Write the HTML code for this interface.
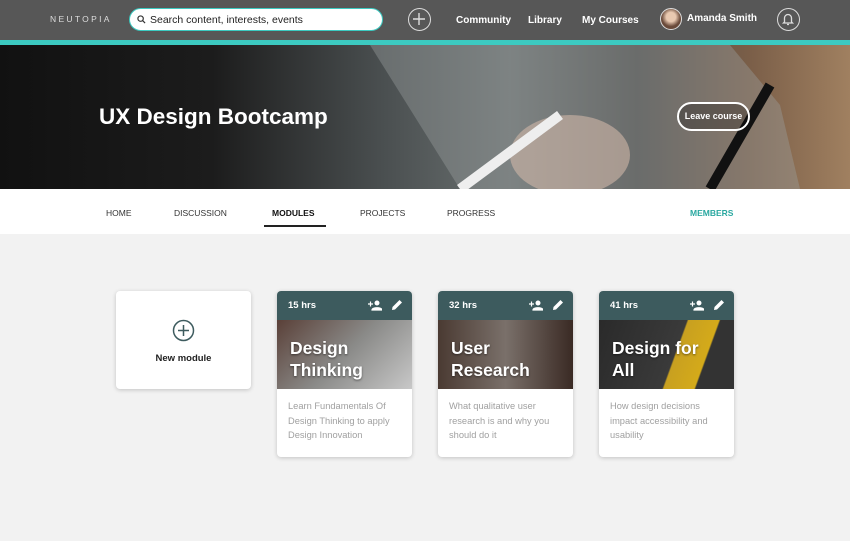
<!DOCTYPE html>
<html><head><meta charset="utf-8"><style>
*{margin:0;padding:0;box-sizing:border-box}
body{width:850px;height:541px;overflow:hidden;background:#f2f2f2;font-family:"Liberation Sans",sans-serif;position:relative}
.nav{position:absolute;left:0;top:0;width:850px;height:40px;background:#575757;color:#fff}
.strip{position:absolute;left:0;top:40px;width:850px;height:5px;background:#3ccac1}
.logo{position:absolute;left:50px;top:14px;font-size:8.5px;letter-spacing:2.3px;color:#ddd}
.search{position:absolute;left:129px;top:8px;width:254px;height:23px;background:#fff;border-radius:12px;border:1.5px solid #3ccac1;font-size:10.5px;color:#222;padding:5px 0 0 20px}
.plus{position:absolute;left:408px;top:8px;width:23px;height:23px;border:1.5px solid #ddd;border-radius:50%}
.nl{position:absolute;top:15px;font-size:10px;font-weight:bold}
.avatar{position:absolute;left:660px;top:8px;width:22px;height:22px;border-radius:50%;background:radial-gradient(circle at 50% 40%,#e8c8b0 30%,#6a4a3a 60%);border:1.5px solid #ddd}
.bell{position:absolute;left:777px;top:8px;width:23px;height:23px;border:1.5px solid #ddd;border-radius:50%}
.hero{position:absolute;left:0;top:45px;width:850px;height:144px;background:linear-gradient(90deg,#111 0%,#1c1c1c 25%,#4a4f50 45%,#6a7070 60%,#4a4a48 75%,#7a5e48 88%,#a08060 100%);overflow:hidden}
.hero h1{position:absolute;left:99px;top:59px;color:#fff;font-size:22.5px;font-weight:bold}
.leave{position:absolute;left:677px;top:57px;width:73px;height:29px;border:2px solid #fff;border-radius:15px;color:#fff;font-size:9px;font-weight:bold;text-align:center;line-height:25px;background:rgba(0,0,0,.25)}
.tabs{position:absolute;left:0;top:189px;width:850px;height:45px;background:#fff}
.tab{position:absolute;top:19px;font-size:8.5px;color:#333}
.card{position:absolute;top:291px;width:135px;height:166px;background:#fff;border-radius:4px;box-shadow:0 1px 4px rgba(0,0,0,.2);overflow:hidden}
.ch{height:29px;background:#3d5b5e;color:#fff;font-size:9.5px;font-weight:bold;padding:9px 0 0 11px;position:relative}
.ci{height:69px;position:relative;color:#fff;font-weight:bold;font-size:17.5px;line-height:22px;padding:17px 0 0 13px;text-shadow:0 1px 2px rgba(0,0,0,.5)}
.cd{padding:10px 11px;font-size:9.3px;line-height:14.5px;color:#a0a0a0}
.ic{position:absolute;top:8px}
</style></head><body>
<div class="nav">
<div class="logo">NEUTOPIA</div>
<div class="search"><svg style="position:absolute;left:7px;top:6px" width="9" height="9" viewBox="0 0 10 10"><circle cx="4" cy="4" r="3" fill="none" stroke="#333" stroke-width="1.3"/><path d="M6.2 6.2L9 9" stroke="#333" stroke-width="1.3"/></svg>Search content, interests, events</div>
<div class="plus"><svg width="20" height="20" viewBox="0 0 20 20"><path d="M10 4v12M4 10h12" stroke="#ddd" stroke-width="1.4"/></svg></div>
<div class="nl" style="left:456px">Community</div>
<div class="nl" style="left:528px">Library</div>
<div class="nl" style="left:582px">My Courses</div>
<div class="avatar"></div>
<div class="nl" style="left:687px;top:13px">Amanda Smith</div>
<div class="bell"><svg width="20" height="20" viewBox="0 0 20 20"><path d="M6.5 13V9a3.5 3.5 0 0 1 7 0v4l1 1h-9z M9 15.5h2" fill="none" stroke="#ddd" stroke-width="1.3"/></svg></div>
</div>
<div class="strip"></div>
<div class="hero">
<svg style="position:absolute;left:330px;top:0" width="470" height="144"><path d="M40 0L130 144H470L450 60L400 0Z" fill="#9aa0a0" opacity=".4"/><path d="M380 144L440 40" stroke="#111" stroke-width="10"/><ellipse cx="240" cy="110" rx="60" ry="40" fill="#d0b8a8" opacity=".6"/><path d="M130 144L230 70" stroke="#eee" stroke-width="10"/></svg>
<h1>UX Design Bootcamp</h1>
<div class="leave">Leave course</div>
</div>
<div class="tabs">
<div class="tab" style="left:106px">HOME</div>
<div class="tab" style="left:174px">DISCUSSION</div>
<div class="tab" style="left:272px;color:#111;font-weight:bold">MODULES</div>
<div style="position:absolute;left:264px;top:36px;width:62px;height:2px;background:#222"></div>
<div class="tab" style="left:360px">PROJECTS</div>
<div class="tab" style="left:447px">PROGRESS</div>
<div class="tab" style="left:690px;color:#2aa8a0;font-weight:bold">MEMBERS</div>
</div>
<div style="position:absolute;left:116px;top:291px;width:135px;height:98px;background:#fff;border-radius:4px;box-shadow:0 1px 4px rgba(0,0,0,.2)">
<svg style="position:absolute;left:56px;top:28px" width="23" height="23" viewBox="0 0 23 23"><circle cx="11.5" cy="11.5" r="10" fill="none" stroke="#3d5b5e" stroke-width="1.5"/><path d="M11.5 6v11M6 11.5h11" stroke="#3d5b5e" stroke-width="1.5"/></svg>
<div style="position:absolute;top:62px;width:135px;text-align:center;font-size:9.5px;font-weight:bold;color:#222">New module</div>
</div>
<div class="card" style="left:277px"><div class="ch">15 hrs<svg class="ic" style="left:91px" width="14" height="12" viewBox="0 0 14 12"><circle cx="9" cy="4" r="2.5" fill="#fff"/><path d="M4 11c0-3 10-3 10 0z M0 5h5M2.5 2.5v5" fill="#fff" stroke="#fff" stroke-width="1.2"/></svg><svg class="ic" style="left:114px" width="12" height="12" viewBox="0 0 12 12"><path d="M1 11l.5-3 7-7 2.5 2.5-7 7z" fill="#fff"/></svg></div><div class="ci" style="background:linear-gradient(135deg,#5a4038,#8a8a88 50%,#c8c8c8)">Design<br>Thinking</div><div class="cd">Learn Fundamentals Of Design Thinking to apply Design Innovation</div></div>
<div class="card" style="left:438px"><div class="ch">32 hrs<svg class="ic" style="left:91px" width="14" height="12" viewBox="0 0 14 12"><circle cx="9" cy="4" r="2.5" fill="#fff"/><path d="M4 11c0-3 10-3 10 0z M0 5h5M2.5 2.5v5" fill="#fff" stroke="#fff" stroke-width="1.2"/></svg><svg class="ic" style="left:114px" width="12" height="12" viewBox="0 0 12 12"><path d="M1 11l.5-3 7-7 2.5 2.5-7 7z" fill="#fff"/></svg></div><div class="ci" style="background:linear-gradient(90deg,#4a3a32,#7a706a 50%,#3a2a24)">User<br>Research</div><div class="cd">What qualitative user research is and why you should do it</div></div>
<div class="card" style="left:599px"><div class="ch">41 hrs<svg class="ic" style="left:91px" width="14" height="12" viewBox="0 0 14 12"><circle cx="9" cy="4" r="2.5" fill="#fff"/><path d="M4 11c0-3 10-3 10 0z M0 5h5M2.5 2.5v5" fill="#fff" stroke="#fff" stroke-width="1.2"/></svg><svg class="ic" style="left:114px" width="12" height="12" viewBox="0 0 12 12"><path d="M1 11l.5-3 7-7 2.5 2.5-7 7z" fill="#fff"/></svg></div><div class="ci" style="background:linear-gradient(110deg,#2a2a2a 0%,#3a3a3a 55%,#c8a020 56%,#d4aa1a 75%,#333 76%)">Design for<br>All</div><div class="cd">How design decisions impact accessibility and usability</div></div>
</body></html>
